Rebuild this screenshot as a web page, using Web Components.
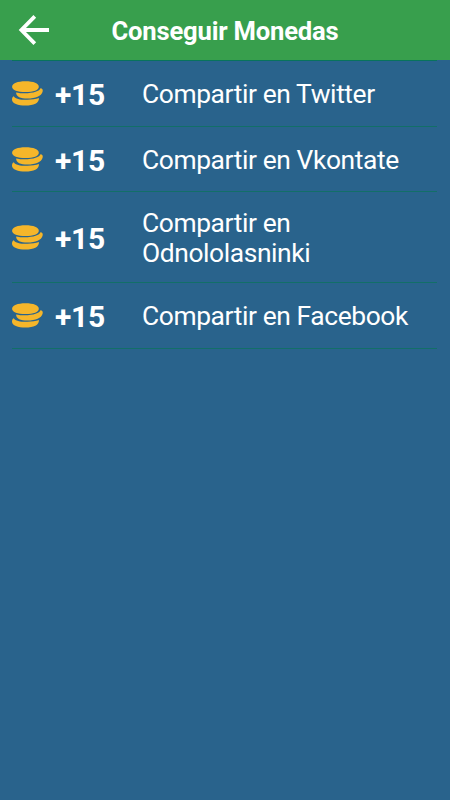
<!DOCTYPE html>
<html lang="es">
<head>
<meta charset="utf-8">
<title>Conseguir Monedas</title>
<style>
html, body { margin: 0; height: 100%; }
body { background: #29638c; font-family: Roboto, sans-serif; color: #fff; }
</style>
</head>
<body>
<coin-screen></coin-screen>
<script>
customElements.define('back-arrow', class extends HTMLElement {
  constructor() {
    super();
    this.attachShadow({ mode: 'open' }).innerHTML = `
      <style>:host { display: block; width: 32px; height: 32px; } svg { display: block; }</style>
      <svg width="32" height="32" viewBox="0 0 32 32" fill="none" stroke="#fff" stroke-width="3.8">
        <path d="M32 16H5M17.8 2.4L4.4 16L17.8 29.6"/>
      </svg>`;
  }
});

customElements.define('coin-icon', class extends HTMLElement {
  constructor() {
    super();
    this.attachShadow({ mode: 'open' }).innerHTML = `
      <style>:host { display: block; width: 32px; height: 25px; } svg { display: block; }</style>
      <svg width="32" height="25" viewBox="0 0 32 25" fill="#f5b62a">
        <path d="M13.5 0.3C21.5 0.3 26.8 2.4 26.8 5.7C26.8 9 21.5 11.1 13.5 11.1C5.5 11.1 0.1 9 0.1 5.7C0.1 2.4 5.5 0.3 13.5 0.3Z"/>
        <path d="M4.1 11.4C9 12.6 18.5 12.7 23.5 10.8C26.5 9.7 28 8.8 28.4 7.2C30.3 7.2 31.2 8.4 30.6 10.8C29.4 15.2 23.6 17.6 15.5 17.6C8.5 17.6 4.2 15.6 4.1 11.4Z"/>
        <path d="M1.8 15.2C3.3 18 8.6 18.9 15.2 18.8C20 18.7 23.6 18 26.9 17C27.4 22.2 21.5 24.5 13.5 24.5C6 24.5 0 22.6 0 18.7C0 16.9 0.6 15.8 1.8 15.2Z"/>
      </svg>`;
  }
});

customElements.define('title-bar', class extends HTMLElement {
  constructor() {
    super();
    this.attachShadow({ mode: 'open' }).innerHTML = `
      <style>
        :host { display: grid; grid-template-columns: 32px 1fr 32px; align-items: center;
          box-sizing: border-box; height: 60px; padding: 0 17px; background: #389f4d; }
        h1 { margin: 0; padding-top: 2px; text-align: center; font-size: 25.6px; letter-spacing: -.2px; line-height: 30px; font-weight: 700; white-space: nowrap; }
      </style>
      <back-arrow></back-arrow><h1><slot></slot></h1>`;
  }
});

customElements.define('reward-row', class extends HTMLElement {
  constructor() {
    super();
    this.attachShadow({ mode: 'open' }).innerHTML = `
      <style>
        :host { display: grid; grid-template-columns: 43px 87px 1fr; align-items: center;
          box-sizing: border-box; border-bottom: 1px solid #126f68; }
        b { font-size: 30px; line-height: 30px; padding-top: 2px; letter-spacing: -.3px; }
        span { font-size: 26.4px; line-height: 30px; letter-spacing: -.4px; }
        :host([low]) b { padding-top: 4px; }
        :host([low]) span { padding-top: 2px; }
      </style>
      <coin-icon></coin-icon><b><slot name="amount"></slot></b><span><slot></slot></span>`;
  }
});

customElements.define('coin-screen', class extends HTMLElement {
  constructor() {
    super();
    this.attachShadow({ mode: 'open' }).innerHTML = `
      <style>
        :host { display: flex; flex-direction: column; height: 100%; }
        main { display: grid; grid-template-rows: 66px 65px 91px 66px; margin: 0 13px 0 12px; border-top: 1px solid #08735d; }
        i { font-style: normal; }
      </style>
      <title-bar>Conseguir Monedas</title-bar>
      <main>
        <reward-row><i slot="amount">+15</i>Compartir en Twitter</reward-row>
        <reward-row low><i slot="amount">+15</i>Compartir en Vkontate</reward-row>
        <reward-row low><i slot="amount">+15</i>Compartir en Odnololasninki</reward-row>
        <reward-row><i slot="amount">+15</i>Compartir en Facebook</reward-row>
      </main>`;
  }
});
</script>
</body>
</html>
